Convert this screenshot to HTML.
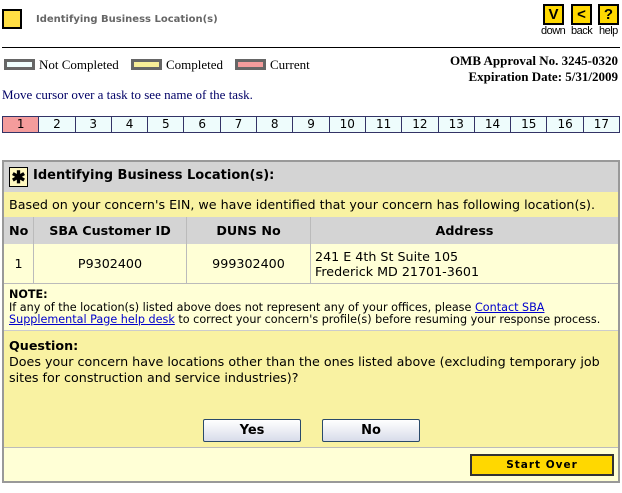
<!DOCTYPE html>
<html><head><style>
body{margin:0;width:622px;height:493px;background:#fff;position:relative;overflow:hidden;font-family:"DejaVu Sans",Verdana,sans-serif}
.a{position:absolute;white-space:nowrap}
.ser{font-family:"Liberation Serif",serif}
.ic{position:absolute;top:4px;width:17px;height:17px;background:#ffd800;border:2px solid #000;font:bold 15px "Liberation Sans",sans-serif;text-align:center;line-height:17px}
.lb{position:absolute;top:25px;font:11px "Liberation Sans",sans-serif;color:#000;letter-spacing:-0.5px}
.lg{position:absolute;top:59px;width:25px;height:5px;border:3px solid #666}
.tasks{position:absolute;left:2px;top:116px;width:618px;height:17px;display:flex;border:1px solid #333366;box-sizing:border-box}
.tasks div{flex:1;background:#eefcfc;border-left:1px solid #333366;text-align:center;font:12px "DejaVu Sans",sans-serif;line-height:15px}
.tasks div:first-child{border-left:none;background:#f49c9c}
.btn{position:absolute;height:21px;border:1px solid #2a4a6a;border-radius:2px;background:linear-gradient(#fff,#d8dcea);font:bold 13px "DejaVu Sans",sans-serif;text-align:center;line-height:21px}
.f{font-size:12.7px}
</style></head><body>
<div class="a" style="left:2px;top:9px;width:16px;height:16px;background:#ffde44;border:2px solid #000"></div>
<div class="a" style="left:36px;top:14px;font-size:10px;font-weight:bold;color:#666">Identifying Business Location(s)</div>
<div class="ic" style="left:543px">V</div><div class="lb" style="left:541px">down</div>
<div class="ic" style="left:571px">&lt;</div><div class="lb" style="left:571px">back</div>
<div class="ic" style="left:598px">?</div><div class="lb" style="left:599px">help</div>
<div class="a" style="left:2px;top:47px;width:618px;height:1px;background:#000"></div>
<div class="lg" style="left:4px;background:#eefcfc"></div><div class="a ser" style="left:39px;top:57px;font-size:13px">Not Completed</div>
<div class="lg" style="left:131px;background:#f8ee98"></div><div class="a ser" style="left:166px;top:57px;font-size:13px">Completed</div>
<div class="lg" style="left:235px;background:#f49c9c"></div><div class="a ser" style="left:270px;top:57px;font-size:13px">Current</div>
<div class="a ser" style="right:4px;top:53px;font-size:13px;font-weight:bold;text-align:right;line-height:16px">OMB Approval No. 3245-0320<br>Expiration Date: 5/31/2009</div>
<div class="a ser" style="left:2px;top:87px;font-size:13px;color:#000066">Move cursor over a task to see name of the task.</div>
<div class="tasks"><div>1</div><div>2</div><div>3</div><div>4</div><div>5</div><div>6</div><div>7</div><div>8</div><div>9</div><div>10</div><div>11</div><div>12</div><div>13</div><div>14</div><div>15</div><div>16</div><div>17</div></div>

<div class="a" style="left:2px;top:160px;width:614px;height:319px;border:2px solid #999;background:#ffffd6"></div>
<div class="a" style="left:4px;top:162px;width:614px;height:30px;background:#d4d4d4"></div>
<div class="a" style="left:9px;top:167px;width:17px;height:18px;border:1px solid #000;background:#fff8c0;font:bold 17px sans-serif;text-align:center;line-height:20px">✱</div>
<div class="a" style="left:33px;top:168px;font-size:13px;font-weight:bold">Identifying Business Location(s):</div>
<div class="a" style="left:4px;top:192px;width:614px;height:25px;background:#f9f2a2"></div>
<div class="a f" style="left:9px;top:197px">Based on your concern's EIN, we have identified that your concern has following location(s).</div>
<div class="a" style="left:4px;top:217px;width:614px;height:27px;background:#d4d4d4"></div>
<div class="a" style="left:4px;top:244px;width:614px;height:39px;background:#ffffd6"></div>
<div class="a" style="left:33px;top:217px;width:1px;height:66px;background:#bbb"></div>
<div class="a" style="left:186px;top:217px;width:1px;height:66px;background:#bbb"></div>
<div class="a" style="left:310px;top:217px;width:1px;height:66px;background:#bbb"></div>
<div class="a" style="left:4px;top:283px;width:614px;height:1px;background:#bbb"></div>
<div class="a f" style="left:9px;top:223px;font-weight:bold">No</div>
<div class="a f" style="left:34px;top:223px;width:152px;text-align:center;font-weight:bold">SBA Customer ID</div>
<div class="a f" style="left:187px;top:223px;width:123px;text-align:center;font-weight:bold">DUNS No</div>
<div class="a f" style="left:311px;top:223px;width:307px;text-align:center;font-weight:bold">Address</div>
<div class="a f" style="left:4px;top:256px;width:29px;text-align:center">1</div>
<div class="a f" style="left:34px;top:256px;width:152px;text-align:center">P9302400</div>
<div class="a f" style="left:187px;top:256px;width:123px;text-align:center">999302400</div>
<div class="a f" style="left:315px;top:249px;line-height:15px">241 E 4th St Suite 105<br>Frederick MD 21701-3601</div>
<div class="a" style="left:9px;top:289px;font-size:11.2px;line-height:12.5px"><b>NOTE:</b><br>If any of the location(s) listed above does not represent any of your offices, please <span style="color:#00c;text-decoration:underline">Contact SBA</span><br><span style="color:#00c;text-decoration:underline">Supplemental Page help desk</span> to correct your concern's profile(s) before resuming your response process.</div>
<div class="a" style="left:4px;top:330px;width:614px;height:1px;background:#ccc"></div>
<div class="a" style="left:4px;top:331px;width:614px;height:116px;background:#f9f2a2"></div>
<div class="a f" style="left:9px;top:338px;line-height:16px"><b>Question:</b><br>Does your concern have locations other than the ones listed above (excluding temporary job<br>sites for construction and service industries)?</div>
<div class="btn" style="left:203px;top:419px;width:96px">Yes</div>
<div class="btn" style="left:322px;top:419px;width:96px">No</div>
<div class="a" style="left:4px;top:447px;width:614px;height:1px;background:#bbb"></div>
<div class="a" style="left:470px;top:454px;width:140px;height:18px;background:#ffd800;border:2px solid #333;font:bold 10.5px 'DejaVu Sans',sans-serif;letter-spacing:1px;text-align:center;line-height:18px">Start Over</div>
</body></html>
